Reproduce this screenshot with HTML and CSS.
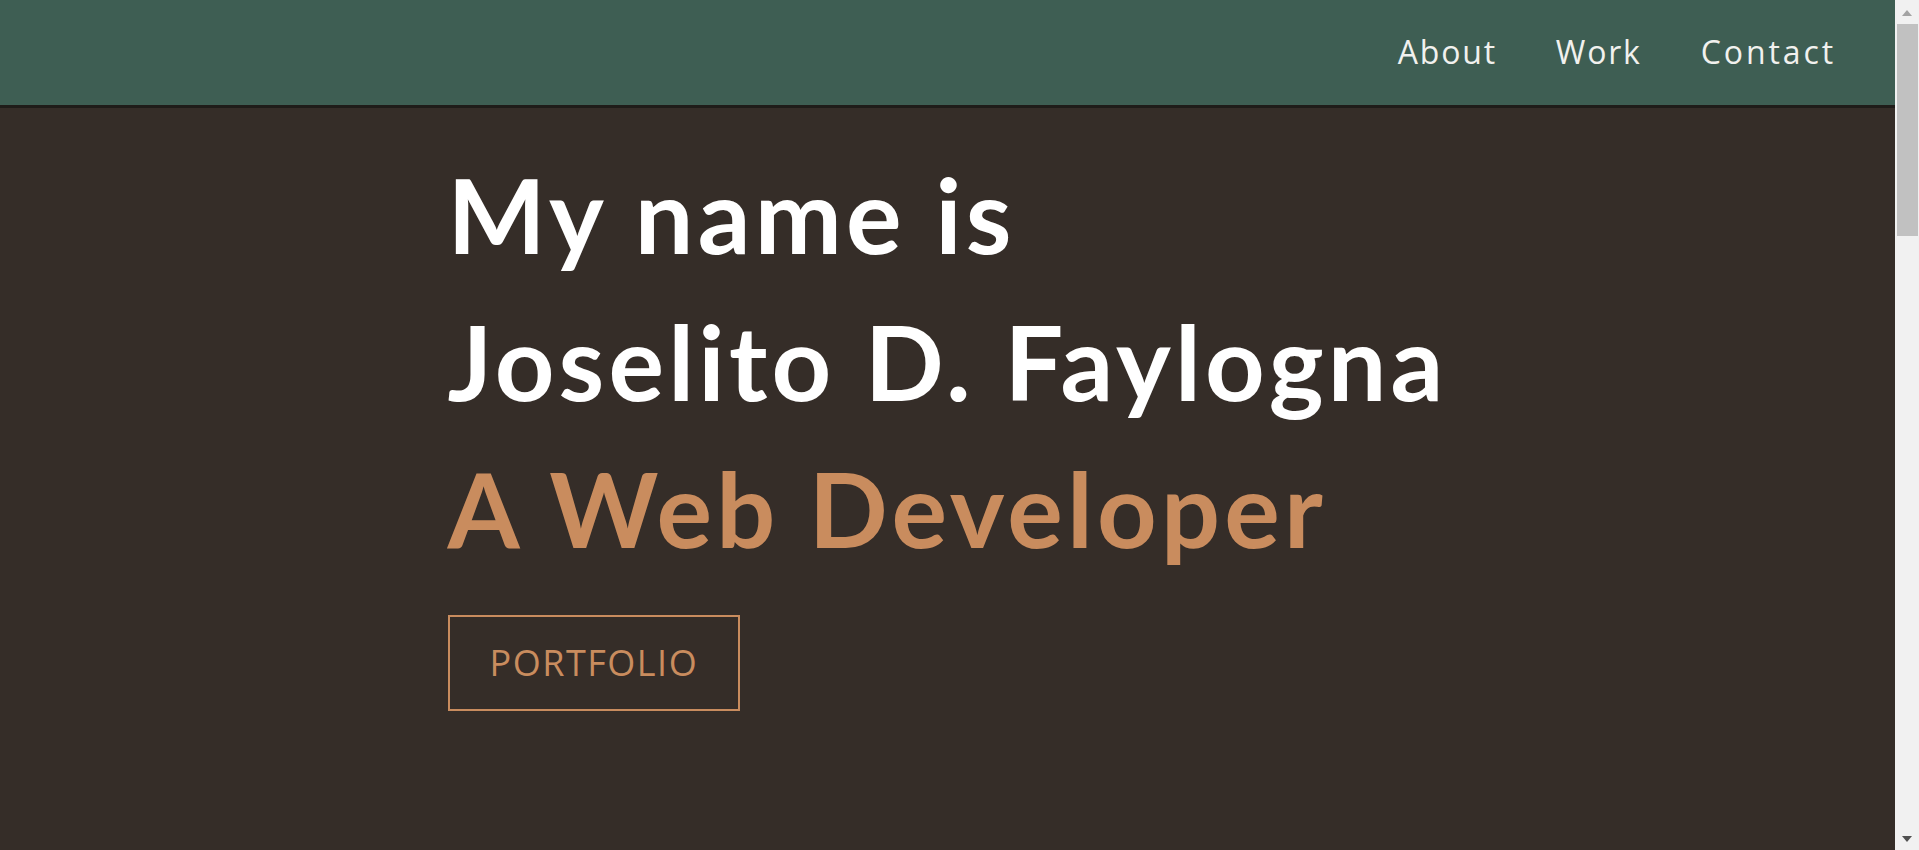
FILE: index.html
```html
<!DOCTYPE html>
<html lang="en">
<head>
<meta charset="utf-8">
<title>Joselito D. Faylogna</title>
<link rel="stylesheet" href="styles.css">
</head>
<body>
<div class="app">
  <div class="viewport">
    <header class="site-header">
      <nav class="nav">
        <a class="nav-link" href="#about">About</a>
        <a class="nav-link" href="#work">Work</a>
        <a class="nav-link nav-link-wide" href="#contact">Contact</a>
      </nav>
    </header>
    <main class="page">
      <section class="hero">
        <h1 class="hero-title">
          <span class="line">My name is</span>
          <span class="line">Joselito D. Faylogna</span>
          <span class="line accent">A Web Developer</span>
        </h1>
        <a class="btn" href="#work">PORTFOLIO</a>
      </section>
    </main>
  </div>
  <div class="rail" aria-hidden="true">
    <div class="rail-btn rail-up"><span class="arrow-up"></span></div>
    <div class="rail-thumb"></div>
    <div class="rail-space"></div>
    <div class="rail-btn rail-down"><span class="arrow-down"></span></div>
  </div>
</div>
</body>
</html>
```

FILE: styles.css
```css
html, body {
  margin: 0;
  padding: 0;
  height: 100%;
  overflow: hidden;
}
body {
  background: #352d28;
  font-family: "Lato", "Open Sans", sans-serif;
  color: #fff;
}
.app {
  display: flex;
  height: 100vh;
}
.viewport {
  flex: 1 1 auto;
  min-width: 0;
  height: 100vh;
  overflow: hidden;
}
.rail {
  flex: 0 0 24px;
  height: 100vh;
  background: #f1f1f1;
  display: flex;
  flex-direction: column;
}
.rail-btn {
  height: 24px;
  display: flex;
  justify-content: center;
}
.rail-up {
  align-items: flex-start;
}
.rail-down {
  align-items: flex-end;
}
.arrow-up {
  margin-top: 10px;
  width: 0;
  height: 0;
  border-left: 5px solid transparent;
  border-right: 5px solid transparent;
  border-bottom: 6px solid #a3a3a3;
}
.arrow-down {
  margin-bottom: 8px;
  width: 0;
  height: 0;
  border-left: 5px solid transparent;
  border-right: 5px solid transparent;
  border-top: 6px solid #505050;
}
.rail-thumb {
  height: 212px;
  margin-left: 2px;
  margin-right: 1px;
  background: #c1c1c1;
}
.rail-space {
  flex: 1;
}
.site-header {
  height: 105px;
  background: #3e5e53;
  border-bottom: 3px solid #1f1c19;
  display: flex;
  align-items: center;
  justify-content: flex-end;
}
.nav {
  display: flex;
  gap: 59px;
  padding-right: 59px;
  margin-top: -2px;
}
.nav-link {
  font-family: "Open Sans", sans-serif;
  font-size: 32px;
  color: #f1f1ee;
  text-decoration: none;
  letter-spacing: 1.8px;
}
.nav-link-wide {
  letter-spacing: 2.9px;
}
.page {
  min-height: 3150px;
}
.hero {
  width: 1000px;
  margin: 0 auto;
  padding-top: 32px;
  display: flex;
  flex-direction: column;
  align-items: flex-start;
}
.hero-title {
  margin: 0;
  font-family: "Lato", sans-serif;
  font-weight: 700;
  font-size: 104px;
  line-height: 147px;
  letter-spacing: 4.2px;
}
.line {
  display: block;
  white-space: nowrap;
}
.accent {
  color: #c98c5e;
}
.btn {
  margin-top: 34px;
  border: 2px solid #c98c5e;
  color: #c98c5e;
  font-family: "Open Sans", sans-serif;
  font-size: 36px;
  line-height: 50px;
  letter-spacing: 1.5px;
  text-decoration: none;
  padding: 21px 40px;
}
```
